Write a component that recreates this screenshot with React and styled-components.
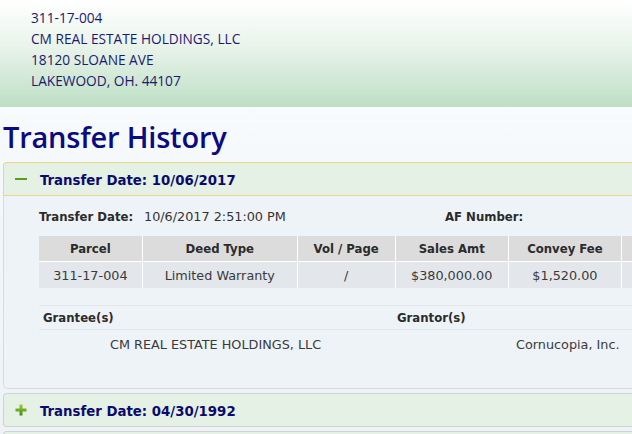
import React from 'react'
import styled, { createGlobalStyle } from 'styled-components'

const GlobalStyle = createGlobalStyle`
  html, body {
    margin: 0;
    overflow: hidden;
  }
  body {
    background: linear-gradient(#fdfeff 0%, #f3f7fa 45%, #edf2f7 100%);
    font-family: "DejaVu Sans", sans-serif;
    min-height: 434px;
  }
`

const Page = styled.div`
  width: 720px;
`

const OwnerBand = styled.header`
  height: 107px;
  box-sizing: border-box;
  padding: 7px 0 0 31px;
  background: linear-gradient(#ffffff 0%, #e8f3ea 45%, #bddfc4 100%);
  font-family: "Open Sans", sans-serif;
  font-size: 13.7px;
  line-height: 21px;
  color: #1a1a70;
`

const Title = styled.h1`
  margin: 11px 0 6px 3px;
  font-family: "Open Sans", sans-serif;
  font-weight: 600;
  font-size: 29px;
  line-height: 38px;
  color: #0a0a82;
  letter-spacing: -0.2px;
`

const Section = styled.section`
  margin: 0 0 4px 3px;
`

const SectionHead = styled.div`
  height: 32px;
  display: flex;
  align-items: center;
  gap: 13px;
  padding-left: 11px;
  background: #e6f1e6;
  border: 1px solid ${p => (p.$open ? '#ecd68a' : '#cfd4d2')};
  border-radius: ${p => (p.$open ? '4px 0 0 0' : '4px 0 0 4px')};
  border-right: none;
  font-family: "DejaVu Sans Condensed", "DejaVu Sans", sans-serif;
  font-size: 14.8px;
  font-weight: bold;
  color: #0b0b6e;
`

const SectionBody = styled.div`
  padding: 13px 0 18px 35px;
  background: #eef3f8;
  border: 1px solid #d6dce2;
  border-top: none;
  border-right: none;
  border-radius: 0 0 0 5px;
  font-size: 12.8px;
  color: #333;
`

const InfoRow = styled.div`
  display: grid;
  grid-template-columns: 105px 301px auto;
  align-items: baseline;
  height: 21px;
  margin-bottom: 6px;
`

const Label = styled.span`
  font-family: "DejaVu Sans Condensed", "DejaVu Sans", sans-serif;
  font-size: 13px;
  font-weight: bold;
  color: #2b2b2b;
`

const Table = styled.table`
  border-collapse: collapse;
  font-size: 12.8px;
  color: #3a3a3a;

  th, td {
    padding: 0;
    text-align: center;
    border-left: 1px solid #fff;
  }
  th:first-child, td:first-child {
    border-left: none;
  }
  th {
    height: 25px;
    background: #dcdcdc;
    font-family: "DejaVu Sans Condensed", "DejaVu Sans", sans-serif;
    font-size: 13px;
    font-weight: bold;
    color: #2b2b2b;
    border-bottom: 1px solid #fff;
  }
  td {
    height: 26px;
    background: #e3e7eb;
  }
`

const PartyGrid = styled.div`
  display: grid;
  grid-template-columns: 354px 1fr;
  margin-top: 17px;
`

const PartyHead = styled.div`
  padding: 4px 0 4px 4px;
  border-top: 1px solid #e2e7ec;
  border-bottom: 1px solid #e2e7ec;
  font-family: "DejaVu Sans Condensed", "DejaVu Sans", sans-serif;
  font-size: 13px;
  font-weight: bold;
  color: #2b2b2b;
`

const PartyName = styled.div`
  padding: 7px 0 0 ${p => p.$indent}px;
  height: 33px;
  color: #3a3a3a;
`

const Toggle = ({ open }) => (
  <svg width="12" height="12" viewBox="0 0 12 12">
    <defs>
      <linearGradient id="toggleFill" x1="0" y1="0" x2="0" y2="1">
        <stop offset="0" stopColor="#9acd32" />
        <stop offset="1" stopColor="#3f8a12" />
      </linearGradient>
    </defs>
    {open ? (
      <rect x="0" y="5" width="12" height="2" fill="#5a9e1e" />
    ) : (
      <path d="M4.5 0.5h3v4h4v3h-4v4h-3v-4h-4v-3h4z" fill="url(#toggleFill)" />
    )}
  </svg>
)

const columns = [
  ['Parcel', 104],
  ['Deed Type', 156],
  ['Vol / Page', 98],
  ['Sales Amt', 113],
  ['Convey Fee', 113],
  ['', 100],
]

const row = ['311-17-004', 'Limited Warranty', '/', '$380,000.00', '$1,520.00', '']

export default function App() {
  return (
    <Page>
      <GlobalStyle />
      <OwnerBand>
        <div>311-17-004</div>
        <div>CM REAL ESTATE HOLDINGS, LLC</div>
        <div>18120 SLOANE AVE</div>
        <div>LAKEWOOD, OH. 44107</div>
      </OwnerBand>

      <Title>Transfer History</Title>

      <Section>
        <SectionHead $open>
          <Toggle open />
          <span>Transfer Date: 10/06/2017</span>
        </SectionHead>
        <SectionBody>
          <InfoRow>
            <Label>Transfer Date:</Label>
            <span>10/6/2017 2:51:00 PM</span>
            <Label>AF Number:</Label>
          </InfoRow>
          <Table>
            <thead>
              <tr>
                {columns.map(([name, w], i) => (
                  <th key={i} style={{ width: w }}>{name}</th>
                ))}
              </tr>
            </thead>
            <tbody>
              <tr>
                {row.map((v, i) => (
                  <td key={i}>{v}</td>
                ))}
              </tr>
            </tbody>
          </Table>
          <PartyGrid>
            <PartyHead>Grantee(s)</PartyHead>
            <PartyHead>Grantor(s)</PartyHead>
            <PartyName $indent={71}>CM REAL ESTATE HOLDINGS, LLC</PartyName>
            <PartyName $indent={123}>Cornucopia, Inc.</PartyName>
          </PartyGrid>
        </SectionBody>
      </Section>

      <Section>
        <SectionHead>
          <Toggle />
          <span>Transfer Date: 04/30/1992</span>
        </SectionHead>
      </Section>
      <Section>
        <SectionHead>
          <span />
        </SectionHead>
      </Section>
    </Page>
  )
}
